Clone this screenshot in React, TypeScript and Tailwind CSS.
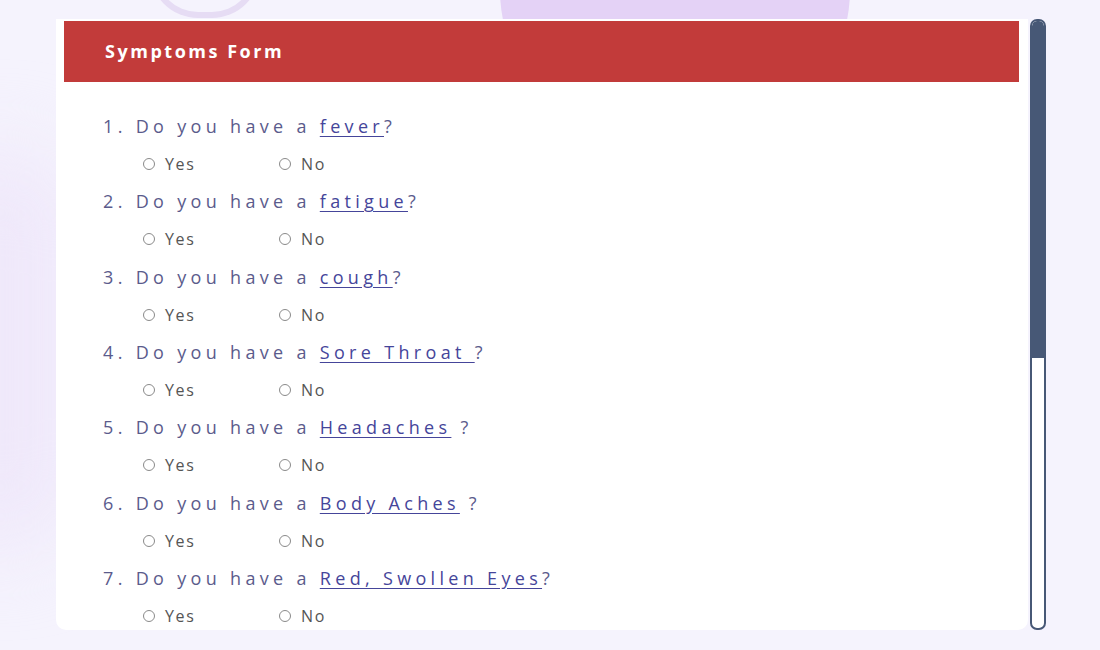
const questions = [
  { n: 1, pre: "Do you have a ", link: "fever", post: "?" },
  { n: 2, pre: "Do you have a ", link: "fatigue", post: "?" },
  { n: 3, pre: "Do you have a ", link: "cough", post: "?" },
  { n: 4, pre: "Do you have a ", link: "Sore Throat ", post: "?" },
  { n: 5, pre: "Do you have a ", link: "Headaches", post: " ?" },
  { n: 6, pre: "Do you have a ", link: "Body Aches", post: " ?" },
  { n: 7, pre: "Do you have a ", link: "Red, Swollen Eyes", post: "?" },
];

const Radio = ({ label }: { label: string }) => (
  <label className="flex items-center gap-[10px] w-[136px] text-[16px] tracking-[0.1em] text-[#555]">
    <span className="block h-[12px] w-[12px] rounded-full border border-[#8a8a8a] bg-white" />
    <span>{label}</span>
  </label>
);

export default function App() {
  return (
    <div
      className="relative h-[650px] w-[1100px] overflow-hidden bg-[#f5f3fd]"
      style={{ fontFamily: '"Open Sans", "Liberation Sans", sans-serif' }}
    >
      {/* background decoration */}
      <div className="absolute left-[500px] top-[-160px] h-[300px] w-[350px] rounded-full bg-[#e4d2f6]" />
      <div className="absolute left-[150px] top-[-30px] h-[48px] w-[110px] rounded-b-full border-[6px] border-t-0 border-[#e6dcf4]" />
      <div className="absolute left-[-80px] top-[150px] h-[400px] w-[160px] rounded-full bg-[#efe8fa] blur-2xl" />

      <div className="relative flex gap-[2px] pl-[56px] pt-[19px]">
        <div className="h-[611px] w-[972px] overflow-hidden rounded-b-[10px] bg-white">
          <div className="ml-[8px] mt-[2px] flex h-[61px] w-[955px] items-center bg-[#c23b3a] pl-[41px]">
            <h1 className="text-[18px] font-bold tracking-[0.14em] text-white">Symptoms Form</h1>
          </div>
          <div className="pl-[47px] pt-[26px]">
            {questions.map((q) => (
              <div key={q.n}>
                <div className="flex h-[37px] items-center text-[18px] tracking-[0.24em] text-[#5b5b8c]">
                  <span>
                    {q.n}. {q.pre}
                    <a className="text-[#45459a] underline underline-offset-[3px]">{q.link}</a>
                    {q.post}
                  </span>
                </div>
                <div className="flex h-[38.33px] items-center pl-[40px]">
                  <Radio label="Yes" />
                  <Radio label="No" />
                </div>
              </div>
            ))}
          </div>
        </div>
        <div className="flex h-[611px] w-[16px] flex-col overflow-hidden rounded-[7px] border-2 border-[#475876] bg-white">
          <div className="h-[337px] w-full rounded-t-[5px] bg-[#475876]" />
        </div>
      </div>
    </div>
  );
}
